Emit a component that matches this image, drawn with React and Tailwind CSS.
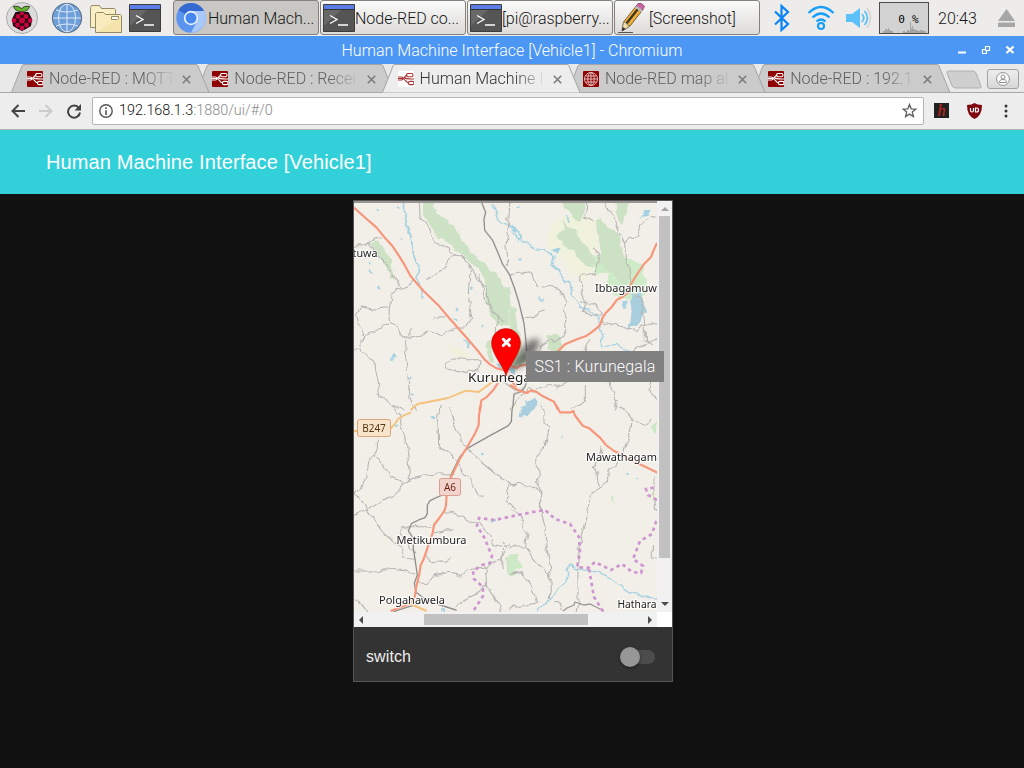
import React from "react";

const tabs = [
  { title: "Node-RED : MQTT", icon: "red", z: "z-30" },
  { title: "Node-RED : Recei", icon: "red", z: "z-20" },
  { title: "Human Machine I", icon: "white", active: true, z: "z-40" },
  { title: "Node-RED map al", icon: "globe", z: "z-30" },
  { title: "Node-RED : 192.1", icon: "red", z: "z-20" },
];

function Raspberry() {
  const seeds = [[16, 17.5], [24, 17.5], [12, 21.5], [20, 21.5], [28, 21.5], [15.5, 26], [24.5, 26], [20, 29]];
  return (
    <svg width="32" height="32" viewBox="0 0 32 32">
      <circle cx="16" cy="16" r="15.500" fill="#dcdcdc" stroke="#aaa" />
      <path d="M15.500 9.500C11 10 8 7 7.500 4.500c3-.7 7 0 8 2.500 1-2.500 5-3.200 8-2.500-.5 3-3.500 5.500-8 5z" fill="#62b32e" stroke="#222" strokeWidth=".8" />
      <path d="M9.500 10h13l3.500 7-1 7-5 3-4 2-4-2-5-3-1-7z" fill="#240510" />
      <g fill="#c7053d" transform="translate(-4 -3)">
        {seeds.map(([x, y], i) => <circle key={i} cx={x} cy={y} r={i === 3 ? 3 : 2.4} />)}
        <circle cx="20" cy="14.500" r="1.900" />
      </g>
    </svg>
  );
}

function Globe() {
  return (
    <svg width="32" height="32" viewBox="0 0 32 32">
      <circle cx="16" cy="16" r="14.700" fill="#6f9fd8" stroke="#55657a" />
      <g fill="none" stroke="#dce9f8" strokeWidth="1">
        <path d="M16 2v28M2 16h28M5 8q11 4 22 0M5 24q11-4 22 0" />
        <ellipse cx="16" cy="16" rx="8.500" ry="14" />
      </g>
    </svg>
  );
}

function Folders() {
  return (
    <svg width="34" height="32" viewBox="0 0 34 32">
      <g stroke="#958a63">
        <path d="M1.500 25.500v-20l1-2h8l2 3h13l1 1v18z" fill="#f8efc6" />
        <path d="M6.500 30.500v-19l1-1h7l2 2h15l1 1v17z" fill="#f8ebbd" />
        <path d="M22.500 14.500h7v3h-7z" fill="#fff" />
      </g>
      <path d="M32 15v15H8z" fill="#f2e0a5" opacity=".7" />
    </svg>
  );
}

function Terminal({ className = "" }) {
  return (
    <svg className={`shrink-0 ${className}`} width="32" height="28" viewBox="0 0 32 28">
      <path d="M.5.500h31v27H.5z" fill="#555" stroke="#3c3c3c" />
      <path d="M1 6h17L1 22z" fill="#686868" />
      <path d="M1 1h30v4H1z" fill="#5b7ee6" />
      <path d="M1 5.500h30" stroke="#333" />
      <path d="M7 11.500l7 4-7 4M15 21h10" fill="none" stroke="#fff" strokeWidth="1.300" />
    </svg>
  );
}

function ChromiumIcon() {
  return (
    <svg className="shrink-0" width="30" height="30" viewBox="0 0 30 30">
      <circle cx="15" cy="15" r="14.700" fill="#5b94ee" />
      <path d="M15 15L2.500 7A14.700 14.700 0 0 1 28 8H15z" fill="#3569cf" />
      <path d="M15 8h13a14.700 14.700 0 0 1-13 21.700L21 18z" fill="#a9c9fb" />
      <circle cx="15" cy="15" r="7.200" fill="#e9f1fe" />
      <circle cx="15" cy="15" r="5.500" fill="#4688f0" />
    </svg>
  );
}

function Pencil() {
  return (
    <svg className="shrink-0" width="30" height="32" viewBox="0 0 30 32">
      <path d="M1 30.500h15" stroke="#555" />
      <path d="M5 29l1.500-9L20 3l6 4.500L13 24z" fill="#eeb03a" stroke="#5a4523" strokeWidth=".8" />
      <path d="M9 22L22.500 5" stroke="#3c3425" strokeWidth="2.200" />
      <path d="M5 29l1.500-9 3 1 1 2.300 2.500.7z" fill="#f3dcae" stroke="#665" strokeWidth=".6" />
      <path d="M5 29l.7-4 2.800 2z" fill="#222" />
      <path d="M18.500 5L21 1.500q4-1.500 6.500 3L25 9z" fill="#cc63a5" stroke="#6f3a5c" strokeWidth=".7" />
      <path d="M18 5.500l6.500 5 1.500-2L19.500 3.500z" fill="#b9b9b9" />
    </svg>
  );
}

function NodeRedIcon({ kind }) {
  const white = kind === "white";
  return (
    <svg className="shrink-0" width="16" height="16" viewBox="0 0 16 16">
      <rect width="16" height="16" rx="1" fill={white ? "#fff" : "#8f0000"} />
      {kind === "globe" ? (
        <g fill="none" stroke="#e8c9c9" strokeWidth=".9">
          <circle cx="8" cy="8" r="6.500" /><ellipse cx="8" cy="8" rx="3.200" ry="6.500" />
          <path d="M8 1.500v13M1.500 8h13M2.500 5h11M2.500 11h11" />
        </g>
      ) : (
        <g fill="none" stroke={white ? "#a33" : "#fff"} strokeWidth="1.100">
          <path d="M0 7.500h4C7.500 7.500 6.500 4 9.500 4M4 7.500c4 0 3.500 4.500 7 4.500M6 6.500c2 1.800 5 1.700 10 1.500" />
          <rect x="8.500" y="2.500" width="6.500" height="3.200" rx="1.400" />
          <rect x="10.500" y="10.400" width="5.500" height="3.200" rx="1.400" />
          <path d="M0 6h3.500q1.300 0 1.300 1.500T3.500 9H0" />
        </g>
      )}
    </svg>
  );
}

function TaskButton({ icon, label, pressed }) {
  return (
    <div className={`flex h-[35px] w-[146px] items-center overflow-hidden rounded-[3px] border border-[#85817d] pl-[2px] ${pressed ? "bg-[#c9c7c4]" : "bg-linear-to-b from-[#fafafa] to-[#dddbd8]"}`}>
      {icon}
      <span className="ml-[2px] pt-[2px] text-[16px] tracking-[-0.02px] whitespace-nowrap text-[#161616]">{label}</span>
    </div>
  );
}

function Taskbar() {
  return (
    <div className="flex h-9 bg-[#edeceb]">
      <div className="flex w-[173px] shrink-0 items-center pl-[6px]">
        <Raspberry />
        <div className="ml-[13px]"><Globe /></div>
        <div className="ml-[6px]"><Folders /></div>
        <div className="ml-[6px]"><Terminal /></div>
      </div>
      <div className="flex w-[587px] shrink-0 gap-px">
        <TaskButton pressed icon={<ChromiumIcon />} label="Human Mach..." />
        <TaskButton icon={<Terminal className="-mr-[2px]" />} label="Node-RED co..." />
        <TaskButton icon={<Terminal className="-mr-[2px]" />} label="[pi@raspberry..." />
        <TaskButton icon={<Pencil />} label="[Screenshot]" />
      </div>
      <div className="flex grow items-center pl-[13px]">
        <svg className="shrink-0" width="17" height="28" viewBox="0 0 17 28">
          <path d="M2 7.500l13 12.500-6.500 6V2L15 8 2 20.500" fill="none" stroke="#0a84f5" strokeWidth="2.200" />
        </svg>
        <svg className="ml-[17px] shrink-0" width="28" height="26" viewBox="0 0 28 26">
          <g fill="none" stroke="#18a0f8" strokeWidth="2.200">
            <path d="M1.500 8q12.500-12 25 0M5.500 12.500q8.500-8 17 0M9.500 16.500q4.500-4 9 0" />
            <circle cx="14" cy="21" r="3" />
          </g>
        </svg>
        <svg className="ml-[10px] shrink-0" width="28" height="24" viewBox="0 0 28 24">
          <path d="M1 8h6l8-6v20l-8-6H1z" fill="#5cc0fb" />
          <path d="M17 8q3.500 4 0 8M19.500 5q6 7 0 14" fill="none" stroke="#5cc0fb" strokeWidth="1.800" />
          <path d="M22 2q7 10 0 20" fill="none" stroke="#d5d5d5" strokeWidth="1.600" />
        </svg>
        <div className="relative ml-[6px] h-[32px] w-[50px] shrink-0 border border-[#4c4c4c] bg-[#d2d2d2]">
          <svg className="absolute inset-0" width="48" height="30" viewBox="0 0 48 30">
            <path d="M3 30v-2h2v-2h2v1h1v-2h1v2h2v1h2v2h10v-2h2v1h2v-2h2v1h1V19h1v6h1v-2h1v3h2v1h3v1h2v-1h3v1h3v2z" fill="#a5a5a5" />
          </svg>
          <span className="absolute top-[10px] right-[9px] font-['DejaVu_Sans_Mono',monospace] text-[11px] leading-[14px] font-normal tracking-[0.3px] whitespace-pre text-black">0 %</span>
        </div>
        <span className="ml-[9px] pt-[2px] text-[16px] text-[#161616]">20:43</span>
        <svg className="ml-[21px] shrink-0" width="17" height="18" viewBox="0 0 17 18">
          <path d="M8.500 0L17 12H0zM0 13.500h17V18H0z" fill="#a6a6a6" />
        </svg>
      </div>
    </div>
  );
}

function TitleBar() {
  return (
    <div className="grid h-7 grid-cols-[70px_1fr_70px] items-center bg-[#4d97f4]">
      <span />
      <span className="pt-[2px] text-center text-[16px] tracking-[0.04px] whitespace-nowrap text-white">Human Machine Interface [Vehicle1] - Chromium</span>
      <svg width="64" height="14" viewBox="0 0 64 14">
        <g fill="none" stroke="#fff">
          <path d="M4 9.500h8" strokeWidth="2" />
          <path d="M31.500 3.500h4v4h-4zM31 6.500h-2.500v4h4V8" strokeWidth="1.200" />
          <path d="M52.500 3.500l7 6.500M59.500 3.500l-7 6.500" strokeWidth="2.200" />
        </g>
      </svg>
    </div>
  );
}

function Tab({ title, icon, active, z }) {
  return (
    <div className={`relative -mr-[13px] h-[29px] w-[198.3px] shrink-0 ${z}`}>
      <svg className="absolute inset-0" width="199" height="29" viewBox="0 0 199 29">
        <path d="M.5 28.500L11 2q.5-1.500 2-1.500h172q1.500 0 2 1.500l11 26.500z" fill={active ? "#ededed" : "#cbcbcb"} />
        <path d="M.5 28.500L11 2q.5-1.500 2-1.500h172q1.500 0 2 1.500l11 26.500" fill="none" stroke="#a4a4a4" />
        {!active && <path d="M0 28.500h199" stroke="#a8a8a8" />}
      </svg>
      <div className="relative flex h-full items-center pt-px pl-[16px]">
        <NodeRedIcon kind={icon} />
        <span className={`ml-[6px] w-[126px] overflow-hidden text-[16px] whitespace-nowrap mask-r-from-75% ${active ? "text-[#333]" : "text-[#5e5e5e]"}`}>{title}</span>
        <svg className="ml-[7px] shrink-0" width="9" height="9" viewBox="0 0 9 9">
          <path d="M.8.800l7.400 7.400M8.200.800L.8 8.200" stroke="#7b7b7b" strokeWidth="1.600" />
        </svg>
      </div>
    </div>
  );
}

function TabStrip() {
  return (
    <div className="flex h-[29px] bg-[linear-gradient(to_top,#a8a8a8_1px,#e9e9e9_1px)] pl-[11px]">
      {tabs.map((t) => <Tab key={t.title} {...t} />)}
      <svg className="mt-[6px] ml-[9px] shrink-0" width="36" height="19" viewBox="0 0 36 19">
        <path d="M3 1h24q2 0 3 2l5 13q.5 2-1 2H10q-3 0-4-2L1 3q-.5-2 2-2z" fill="#cfcfcf" stroke="#b0b0b0" />
      </svg>
      <div className="mt-[5px] ml-[5px] flex h-5 w-8 shrink-0 items-center justify-center rounded-[3px] border border-[#a2a2a2] bg-linear-to-b from-[#eee] to-[#d8d8d8]">
        <svg width="14" height="14" viewBox="0 0 14 14">
          <g fill="#fff" stroke="#8e8e8e"><circle cx="7" cy="7" r="6.400" /><path d="M3.500 10.500V9q1-1.500 3.500-1.500T10.500 9v1.500z" /><circle cx="7" cy="5" r="2" /></g>
        </svg>
      </div>
    </div>
  );
}

function Toolbar() {
  return (
    <div className="flex h-[37px] items-center border-b border-[#b3b3b3] bg-[#ededed] pb-px">
      <svg className="ml-[11px] shrink-0" width="14" height="14" viewBox="0 0 14 14"><path d="M14 7H1.500M7.500 1L1.500 7l6 6" fill="none" stroke="#444" strokeWidth="2" /></svg>
      <svg className="ml-[14px] shrink-0" width="14" height="14" viewBox="0 0 14 14"><path d="M0 7h12.500M6.500 1l6 6-6 6" fill="none" stroke="#ccc" strokeWidth="2" /></svg>
      <svg className="ml-[13px] shrink-0" width="16" height="16" viewBox="0 0 16 16"><path d="M13 5.200A6 6 0 1 0 14 9.500" fill="none" stroke="#444" strokeWidth="2" /><path d="M15 1v6.500H8.500z" fill="#444" /></svg>
      <div className="ml-[10px] flex h-7 w-[832px] shrink-0 items-center rounded-[2px] border border-[#b6b6b6] bg-white pl-[6px]">
        <svg className="shrink-0" width="14" height="14" viewBox="0 0 14 14"><circle cx="7" cy="7" r="6.200" fill="none" stroke="#555" strokeWidth="1.400" /><path d="M7 6.300V11M7 3.300v1.700" stroke="#555" strokeWidth="1.600" /></svg>
        <span className="ml-[6px] grow pt-px text-[14.4px] text-[#8a8a8a]"><span className="text-[#111]">192.168.1.3</span>:1880/ui/#/0</span>
        <svg className="mr-[6px]" width="15" height="15" viewBox="0 0 15 15"><path d="M7.500 1.500l1.700 4.300 4.600.3-3.500 3 1.100 4.400-3.900-2.400-3.900 2.400 1.100-4.400-3.500-3 4.600-.3z" fill="none" stroke="#5e5e5e" strokeWidth="1.300" /></svg>
      </div>
      <div className="ml-[10px] flex size-[15px] items-center justify-center bg-[#222] font-['Liberation_Serif',serif] text-[16px] leading-none font-normal text-[#d2231c] italic">h</div>
      <svg className="ml-[18px] shrink-0" width="15" height="16" viewBox="0 0 15 16">
        <path d="M7.500 0Q10 2 15 2q0 11-7.500 14Q0 13 0 2q5 0 7.500-2z" fill="#800610" />
        <path d="M3.500 5v2.500q0 1.500 1.500 1.500t1.500-1.500V5M8.500 5v4h1q2 0 2-2t-2-2z" fill="none" stroke="#fff" strokeWidth="1.200" />
      </svg>
      <svg className="ml-[22px] shrink-0" width="4" height="14" viewBox="0 0 4 14"><g fill="#333"><circle cx="2" cy="2" r="1.500" /><circle cx="2" cy="7" r="1.500" /><circle cx="2" cy="12" r="1.500" /></g></svg>
    </div>
  );
}

function MapLabel({ x, y, w, size = 11, children }) {
  return (
    <text x={x} y={y} textLength={w} lengthAdjust="spacingAndGlyphs" fontSize={size} fill="#222" stroke="#fff" strokeWidth="2.500" strokeOpacity=".8" paintOrder="stroke" strokeLinejoin="round">{children}</text>
  );
}

function RoadMap() {
  return (
    <svg className="block bg-[#f2efe9] font-['Noto_Sans',sans-serif] font-normal" width="303" height="411" viewBox="354 201 303 411">
      <defs>
        {/* gives land edges and small roads a natural, uneven line */}
        <filter id="rough" filterUnits="userSpaceOnUse" x="344" y="191" width="323" height="431" colorInterpolationFilters="sRGB">
          <feTurbulence type="fractalNoise" baseFrequency=".09" numOctaves="2" seed="4" result="n" />
          <feDisplacementMap in="SourceGraphic" in2="n" scale="8" xChannelSelector="R" yChannelSelector="G" />
        </filter>
      </defs>
      <g filter="url(#rough)">
        {/* woodland and farmland */}
        <g transform="translate(350 195) scale(.33333)">
          <path d="M220 0h32v20l4 38 40 24 35 40 30 48 40 28 20 30 20 15 15 12 5 22 18 0v120h-20l-30-20-10-30-13-20 3-30-5-20 0-25-20-30-50-40-40-36-30-18-30-40-15-34z" fill="#cde2c4" />
          <path d="M60 140l14-6 16 8 20 28 12 30 16 48-10 4-24-40-22-34-20-24z" fill="#cde2c4" />
          <path d="M290 450l60 20 20 26-40-6-30-20z" fill="#f0f1dc" />
          <path d="M408 448l20-16v70l-18-10 5-24z" fill="#cde2c4" />
          <path d="M435 502l60 4v32l-40-12z" fill="#a9cfdf" />
        </g>
        <g transform="translate(510 195) scale(.33333)">
          <path d="M120 85l60-25 70 10 10 90-10 60-30 40-50-40-60-80z" fill="#f1f2dd" />
          <path d="M250 180L330 178 400 210 405 250 412 290 360 320 320 300 290 270 295 235 255 235z" fill="#cdebc7" />
          <path d="M162 0h63v22l-8 60-20-6-16-28-20-12zM310 0h42v68l-18 24-16-30z" fill="#cde2c4" />
          <path d="M138 130L155 108 165 105 158 78 178 100 203 115 218 130 228 155 252 185 258 202 245 220 215 200 180 160 145 142z" fill="#cde2c4" />
          <path d="M258 80L275 72 300 100 325 110 330 150 345 190 355 240 345 280 300 230 262 205 275 170 260 110z" fill="#cde2c4" />
          <path d="M0 330l14 10 10 60 15 60 12 40-50 14zM106 420l36-4 16 32-8 24-40-6z" fill="#cde2c4" />
          <path d="M365 290l12 14 10-22 8 34 10 16 6 20-18 20-10 16-12 6-12 12 6-60-4-24z" fill="#a9cfdf" />
          <path d="M34 632l12-4-5-12 14 4 20-12 8 12-13 26H38z" fill="#a9cfdf" />
        </g>
        <g transform="translate(350 405) scale(.33333)"><path d="M470 460l10-12 15 2v55l-12 10-12-16z" fill="#cde2c4" /></g>
        <g transform="translate(510 405) scale(.33333)">
          <path d="M0 0h26l-26 30z" fill="#f1f2dd" />
          <path d="M28 34L40 0h35l-10 12-12 22z" fill="#a9cfdf" />
          <path d="M-4 450l24 0 6 12 8 2 4 20-14 12-24 8-6-2zM423 56l18-5v40l-14-6zM305 273l12 2-4 12-9-4z" fill="#cde9c6" />
          <path d="M420 255h20v30l-20-8z" fill="#f1f2dd" />
        </g>
        {/* rivers and ponds */}
        <g fill="none" stroke="#a5d2e2" strokeWidth="4" strokeLinejoin="round" transform="translate(350 195) scale(.33333)">
          <path d="M164 22l-2 42 6 26 14 30 4 28 10 14-2 28 10 20-6 40 10 16 4 24 4 20" strokeWidth="5" />
          <path d="M425 25l14 20 12 40 34 10 10 18M340 430l20 26" />
          <path d="M80 40l6 8M140 36l8 5M155 128l5 8M58 205l7 4M82 276l8 6M58 228l4 8M310 370l10 3M318 343l6 4M395 395l5 2M178 545l5 8M184 596l5 5M360 282l8 4" strokeWidth="6" />
          <path d="M114 488h12l0-8 10 6" strokeWidth="6" />
        </g>
        <g fill="none" stroke="#a5d2e2" strokeWidth="4" strokeLinejoin="round" transform="translate(510 195) scale(.33333)">
          <path d="M0 95l18 12 16 30 38 18 30 6 34 24-8 22 40 50 20 28-2 16 28 36 28 12 24 28 10 40-2 38 44-4 38 16" />
          <path d="M5 110l20 26 10-10-20-22M165 65l12 15M20 42l12-4M32 190l5 8M90 310l12 6" />
          <path d="M132 165l18-6-8 18zM388 65l14-4 2-14 20-4-10 18zM338 320l10 2-4 18z" fill="#a5d2e2" />
        </g>
        <g fill="none" stroke="#a5d2e2" strokeWidth="4" strokeLinejoin="round" transform="translate(510 405) scale(.33333)">
          <path d="M70 640l10-20 15-18 24-16 44-48 14-36-6-14 8-6 26 8 32 0 26 10 20 14 40 20 18 4 2 20 28 4 40 18 60 4" />
          <path d="M160 90l6 2M347 210l6 0M380 218l8 2" strokeWidth="6" />
        </g>
        <g stroke="#a5d2e2" strokeWidth="6" transform="translate(350 405) scale(.33333)"><path d="M248 42h10M135 62h10M393 143l8 2M168 216h8M420 348l14-3M270 616h16" /></g>
        {/* minor roads */}
        <g fill="none" stroke="#b7b5b3" strokeWidth="3.200" strokeLinejoin="round" transform="translate(350 195) scale(.33333)">
          <path d="M208 0l0 22 2 40 20 34 24 44 30 14 70 54 24 40 30 30 10 50 25 35 25 20M0 152l46 0 14-20 34-6M60 134l-4 18 44 44 52 80M195 260l-42 18-30 24-6 50 6 32 20 26 42 22 52-24 40 14 34-22 34-2 20-26-6-22-4-60 4-40-2-40-26-24-20-4-16 14-6 22-30 14-30 22M246 372l40-8M38 422l-4 48 16 8 24 24 8 44 8 60 70 39M38 422l-16-66 10-20 40 6 46-4M38 422l44-14 36-22M170 430l-4 50 8 60 6 70 16 35M282 500l26-12 46 6 36 0-4 26-40 16-50-14zM0 462h32M385 240l12 40 8 40 25 24 15 36-5 40" />
          <path d="M180 395v30M480 0l-4 92-8 60 2 60" />
        </g>
        <g fill="none" stroke="#b7b5b3" strokeWidth="3.200" strokeLinejoin="round" transform="translate(510 195) scale(.33333)">
          <path d="M0 240l20-4 40-6 20 40 70 10 18 26-10 40 14 50-10 30-25 16-22-10-22 24-15 40M32 370h36l16-20 20-5M230 0v22l-3 48 24 6M288 22l20 46 35 78 8 50 10 84 30 30 12 65 0 62 20 20M343 146l40-20 6-36 36-22 26-4M250 165l18 10-10 60-46 6-6 18 20 60-12 24 32 20 30 0M212 320l50 10 18 50 60 16 40 12 16-20 50 0M451 424l-80 44M0 645l50-60 30 0M78 575l68 0 84-44M300 560l4 24 20 30-8 32M240 430l-20 40M422 560l-5 25 25 30M226 575v40l-40 30" />
        </g>
        <g fill="none" stroke="#b7b5b3" strokeWidth="3.200" strokeLinejoin="round" transform="translate(350 405) scale(.33333)">
          <path d="M82 90l0 40-14 30-12 10-6 50-38 52M72 160l18 5 34 52 40 14-14 20-56 42-52 24-30 14M160 230l60-20 94-5M125 0l24 26 4 30 20 60 8 90-12 20M270 0l-6 60 2 60 50 45 20 30 22 22 24 58 20 2M295 0l18 60 34 70 60 50 74 60h14M0 248l60 80 46 62 48 36 10 36 30 4M0 498h80l22-10 60 6 36 12M12 584l30 20 18 28M282 320l30 4 30 18 46 12 28 34 14 34 20 4 30-10M250 384l60-10M230 445l16 25 50-6 10-5M205 535h30l15-20 50-10 30 6 20-20 60-5 44-20 14-38-12-20M454 432l6 60M405 480l5 60-40 30-60 40M470 230l0 56 25 22M160 362l90 0M160 362l-8 20 40 60M405 535l40 60 10 40" />
        </g>
        <g fill="none" stroke="#b5b4b2" strokeWidth="3.200" strokeLinejoin="round" transform="translate(510 405) scale(.33333)">
          <path d="M92 0l10 16 0 40 12 16-8 42-26 50 8 80 4 60 12 60 4 50 10 60 4 106M328 0l38 40-2 30-20 60-10 30-32 38-16 40-36 24-18 50-18 80-10 50 0 150-10 50M364 42l40 16 20-16M275 120l-8 35-14 30 16 60M0 238l60 2 26 20 12 60M0 310l20 10 20 30 12 38-10 40 60 66 20 24M0 426l40 0M0 505q50-15 70 60l10 30-80 15M130 590q25-5 30 25M430 420v40h10M432 210v80l8 30" />
        </g>
      </g>
      {/* railways */}
      <g fill="none" stroke="#8f8f8f" strokeWidth="4" strokeLinejoin="round" transform="translate(350 195) scale(.33333)">
        <path d="M395 22L407 52 402 72 404 106 428 136 446 178 458 208 478 238 492 275 506 320 522 385 528 440 532 500 532 555 525 575 512 590 492 597 489 630 486 645" />
        <path d="M460 560l34 24 28 2" strokeWidth="3" />
      </g>
      <g fill="none" stroke="#8f8f8f" strokeWidth="4" strokeLinejoin="round" transform="translate(350 405) scale(.33333)">
        <path d="M486 15L484 50 475 62 420 92 352 130 330 155 305 205 300 225 280 268 240 287 232 300 232 325 225 338 206 345 185 355 175 378 190 400 190 430 196 470 202 510 193 535 198 562 220 578 250 594 290 606 320 616" />
        <path d="M130 620l50-16 30-8" />
      </g>
      <path d="M563 611l4-3 7-3 1-3 9 3 6-1 6 3 8 4" fill="none" stroke="#989898" strokeWidth="1.300" />
      {/* main roads */}
      <g fill="none" strokeLinejoin="round" transform="translate(350 195) scale(.33333)">
        <path d="M182 645l20-18 32-6 60-12 54-22 38 4 36-26 36-26M12 708h70l32 0 20-20 10-16 20-12 20-8" stroke="#f5c27c" strokeWidth="5.500" />
        <path d="M12 38L50 72 80 98 106 130 128 154 148 184 165 212 182 244 220 287 268 334 300 372 346 424 384 468 404 494 420 508 440 520 474 528M474 540L490 565 500 574M445 562L430 585 408 608 394 616 392 630 388 645" stroke="#f7967a" strokeWidth="6.500" />
      </g>
      <g fill="none" stroke="#f7967a" strokeWidth="6.500" strokeLinejoin="round" transform="translate(510 195) scale(.33333)">
        <path d="M441 144L430 168 423 186 403 206 390 225 377 244 362 270 353 294 337 306 321 314 305 336 287 354 277 370 271 388 262 398 247 410 230 422 197 434 165 448 145 468 130 476 100 500 60 508 30 512 20 520 -10 505M0 570l22 14 28 10 14-8 14 4 18 12 36 18 8 16 4 8" />
      </g>
      <g fill="none" stroke="#f7967a" strokeWidth="6.500" strokeLinejoin="round" transform="translate(350 405) scale(.33333)">
        <path d="M393 0L387 30 386 60 375 86 348 132 330 160 316 190 302 218 290 270 288 300 284 316 270 336 252 360 248 384 232 430 220 465 212 480 208 508 198 548 194 580 180 596 122 618" />
        <path d="M175 594l55 24" stroke="#f5c27c" />
      </g>
      <g fill="none" stroke="#f7967a" strokeWidth="6.500" strokeLinejoin="round" transform="translate(510 405) scale(.33333)"><path d="M138 0l12 22h32l8-4 4 12 24 32 20 8 32 28 18 22 24 18 20 8 44 26 36 16 32 16" /></g>
      {/* district boundary */}
      <g fill="none" stroke="#cf95d0" strokeWidth="2.700" strokeDasharray="3.500 3.500">
        <path d="M474 610l9-14v-9l-9-8-1-8 9-6 8-2 2-7-8-19-7-11 2-8 16 2 23-5 15-3 12-2 10 9 15 5 9 13 1 16-3 14 11 1 7-6 16 8 11-6 10 8 9 1 2-7-10-7 7-18 12-7 5-15" />
        <path d="M589 569l5 28 10 16M657 500l-9-5-2-6 11-2" />
      </g>
      {/* place names */}
      <MapLabel x="352.500" y="257" w="25">tuwa</MapLabel>
      <MapLabel x="468" y="382" w="74" size={13}>Kurunegala</MapLabel>
      <MapLabel x="595" y="292" w="62">Ibbagamuw</MapLabel>
      <MapLabel x="586" y="461" w="71">Mawathagam</MapLabel>
      <MapLabel x="396.500" y="544" w="70">Metikumbura</MapLabel>
      <MapLabel x="379" y="604" w="66">Polgahawela</MapLabel>
      <MapLabel x="617.500" y="608" w="39">Hathara</MapLabel>
      <g fontSize="10" textAnchor="middle">
        <rect x="357.500" y="419.500" width="33" height="17" rx="2" fill="#f7e4cb" stroke="#dca679" />
        <text x="374" y="431.500" fill="#503a12">B247</text>
        <rect x="439.500" y="478.500" width="21" height="17" rx="2" fill="#f3d4cc" stroke="#dc9d91" />
        <text x="450" y="490.500" fill="#6c1f16">A6</text>
      </g>
      {/* marker */}
      <path d="M506 373l12-18 9-13q15-8 12 3l-8 16z" fill="#333" opacity=".65" className="blur-[3px]" />
      <path d="M506 376c-2-9-14.500-22-14.500-33a14.500 14.500 0 0 1 29 0c0 11-12.500 24-14.500 33z" fill="#f00" stroke="#b51b0b" strokeWidth=".6" />
      <path d="M503.300 339.300l6.200 6.200M509.500 339.300l-6.200 6.200" stroke="#fff" strokeWidth="3" strokeLinecap="round" />
    </svg>
  );
}

function Arrow({ d, color = "#4d4d4d" }) {
  return <svg className="shrink-0" width="8" height="8" viewBox="0 0 8 8"><path d={d} fill={color} /></svg>;
}

function MapPanel() {
  return (
    <div className="relative grid h-[426px] grid-cols-[303px_15px] grid-rows-[411px_15px] bg-white">
      <RoadMap />
      <div className="flex flex-col items-center bg-[#f1f1f1] pt-[4px] pb-[4px]">
        <Arrow d="M0 6l4-4 4 4z" color="#a3a3a3" />
        <div className="mt-[3px] h-[342px] w-[11px] bg-[#c1c1c1]" />
        <div className="mt-auto"><Arrow d="M0 2l4 4 4-4z" /></div>
      </div>
      <div className="flex items-center bg-[#f1f1f1] px-[3px]">
        <Arrow d="M6 0L2 4l4 4z" />
        <div className="ml-[59px] h-[11px] w-[164px] bg-[#c1c1c1]" />
        <div className="ml-auto"><Arrow d="M2 0l4 4-4 4z" /></div>
      </div>
      <div className="absolute top-0 left-0 h-[2px] w-[303px] bg-[#9a9595]" />
      <div className="absolute top-[150px] left-[172px] flex h-[31px] w-[138px] items-center justify-center bg-[#808080] text-[16px] tracking-[0.15px] whitespace-nowrap text-white">SS1 : Kurunegala</div>
    </div>
  );
}

function Dashboard() {
  return (
    <div className="flex grow flex-col bg-[#111] font-['Liberation_Sans',sans-serif] font-normal">
      <header className="flex h-16 items-center bg-[#32d1d9] pl-[46px]">
        <h1 className="text-[20px] tracking-[0.13px] text-white">Human Machine Interface [Vehicle1]</h1>
      </header>
      <main className="mt-[6px] ml-[353px] flex h-[482px] w-[320px] flex-col border border-[#555] bg-[#333]">
        <div className="font-['Roboto',sans-serif] font-light"><MapPanel /></div>
        <div className="flex grow items-center justify-between pt-[6px] pr-[17px] pl-[12px]">
          <span className="text-[16px] tracking-[0.1px] text-[#eee]">switch</span>
          <div className="flex h-[14px] w-[35px] items-center rounded-full bg-[#4c4c4c]">
            <div className="size-5 shrink-0 rounded-full bg-[#979797] shadow-[0_1px_3px_rgba(0,0,0,0.5)]" />
          </div>
        </div>
      </main>
    </div>
  );
}

export default function App() {
  return (
    <div className="flex h-[768px] w-[1024px] flex-col overflow-hidden font-['Roboto',sans-serif] font-light">
      <Taskbar />
      <TitleBar />
      <TabStrip />
      <Toolbar />
      <Dashboard />
    </div>
  );
}
